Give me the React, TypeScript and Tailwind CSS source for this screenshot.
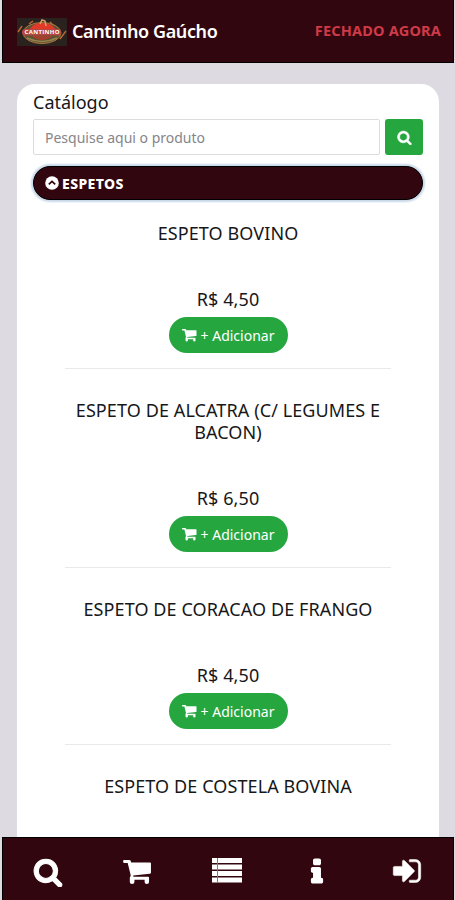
import type { ReactNode } from 'react'

// ─── Data ─────────────────────────────────────────────────────────────────────

const PRODUCTS = [
  { name: 'ESPETO BOVINO', price: 'R$ 4,50' },
  { name: 'ESPETO DE ALCATRA (C/ LEGUMES E BACON)', price: 'R$ 6,50' },
  { name: 'ESPETO DE CORACAO DE FRANGO', price: 'R$ 4,50' },
  { name: 'ESPETO DE COSTELA BOVINA' },
]

// ─── Icons ────────────────────────────────────────────────────────────────────

function Icon({ className, children }: { className: string; children: ReactNode }) {
  return (
    <svg viewBox="0 0 1792 1792" fill="currentColor" className={className} aria-hidden="true">
      {children}
    </svg>
  )
}

function SearchIcon({ className }: { className: string }) {
  return (
    <Icon className={className}>
      <path
        stroke="currentColor"
        strokeWidth="60"
        d="M1216 832q0-185-131.5-316.5t-316.5-131.5-316.5 131.5-131.5 316.5 131.5 316.5 316.5 131.5 316.5-131.5 131.5-316.5zm512 832q0 52-38 90t-90 38q-54 0-90-38l-343-342q-179 124-399 124-143 0-273.5-55.5t-225-150-150-225-55.5-273.5 55.5-273.5 150-225 225-150 273.5-55.5 273.5 55.5 225 150 150 225 55.5 273.5q0 220-124 399l343 343q37 37 37 90z"
      />
    </Icon>
  )
}

function CartIcon({ className }: { className: string }) {
  return (
    <svg viewBox="0 0 30 26" fill="currentColor" className={className} aria-hidden="true">
      <path d="M1 0h5.500q1.500 0 2 2.500H28q1 0 1 1V13q0 1-1 1.200L10.500 16l.3 1.500H26q1 0 1 1v4.500q0 2-2.300 2T22.400 23v-2.500H11.800V23q0 2-2.400 2T7 23v-4.500L8 16 4.800 3H1Q0 3 0 1.500T1 0z" />
    </svg>
  )
}

function ListIcon({ className }: { className: string }) {
  return (
    <svg viewBox="0 0 30 25" fill="currentColor" className={className} aria-hidden="true">
      <path d="M0 0h30v5H0zM0 6.500h30v5H0zM0 13h30v5H0zM0 19.500h30v5H0z" />
      <path d="M5.500 0v25" stroke="#8d7580" strokeWidth="1" />
    </svg>
  )
}

function InfoIcon({ className }: { className: string }) {
  return (
    <Icon className={className}>
      <path
        stroke="currentColor"
        strokeWidth="90"
        d="M1216 1344v128q0 26-19 45t-45 19h-512q-26 0-45-19t-19-45v-128q0-26 19-45t45-19h64v-384h-64q-26 0-45-19t-19-45v-128q0-26 19-45t45-19h384q26 0 45 19t19 45v576h64q26 0 45 19t19 45zm-128-1152v192q0 26-19 45t-45 19h-256q-26 0-45-19t-19-45v-192q0-26 19-45t45-19h256q26 0 45 19t19 45z"
      />
    </Icon>
  )
}

function SignInIcon({ className }: { className: string }) {
  return (
    <Icon className={className}>
      <path
        stroke="currentColor"
        strokeWidth="30"
        d="M1312 896q0 26-19 45l-544 544q-19 19-45 19t-45-19-19-45v-288h-448q-26 0-45-19t-19-45v-384q0-26 19-45t45-19h448v-288q0-26 19-45t45-19 45 19l544 544q19 19 19 45zm352-352v704q0 119-84.5 203.5t-203.5 84.5h-320q-13 0-22.5-9.5t-9.5-22.5q0-4-1-20t-.5-26.5 3-23.5 10-19.5 20.5-6.5h320q66 0 113-47t47-113v-704q0-66-47-113t-113-47h-312l-11.5-1-11.5-3-8-5.5-7-9-2-13.5q0-4-1-20t-.5-26.5 3-23.5 10-19.5 20.5-6.5h320q119 0 203.5 84.5t84.5 203.5z"
      />
    </Icon>
  )
}

function ChevronCircleIcon({ className }: { className: string }) {
  return (
    <svg viewBox="0 0 14 14" className={className} aria-hidden="true">
      <circle cx="7" cy="7" r="6.8" fill="currentColor" />
      <path d="M3.800 8.300 7 5.300l3.200 3" fill="none" stroke="#32060e" strokeWidth="1.700" />
    </svg>
  )
}

function Logo() {
  return (
    <svg viewBox="0 0 50 28" className="mt-0.5 h-7 w-[50px] shrink-0" aria-hidden="true">
      <rect width="50" height="28" fill="#29221f" />
      <path d="M1 14 5 8M43 21l6-8M12 6l4-3M33 4l4 4" stroke="#b56b38" strokeWidth="1.4" />
      <ellipse cx="25" cy="15" rx="19" ry="10.500" fill="#5c5235" stroke="#ad7841" />
      <path d="M13 11q4-7 12-6 10 0 13 6z" fill="#e0392a" />
      <path d="M23 6 25 2l3 1 1 5" fill="none" stroke="#dfa066" strokeWidth="1.5" />
      <path d="M15 18h20q-4 4-10 4t-10-4" fill="#a3402c" />
      <path d="M10 20q15 7 30 0" fill="none" stroke="#98834b" strokeWidth="1.5" />
      <rect x="5" y="11" width="39" height="6.500" rx="3" fill="#b5473e" />
      <text x="25" y="16.300" textAnchor="middle" textLength="35" fontSize="6" fontWeight="700" fill="#fff" fontFamily="Open Sans, sans-serif">
        CANTINHO
      </text>
    </svg>
  )
}

// ─── Product ──────────────────────────────────────────────────────────────────

function Product({ name, price }: { name: string; price?: string }) {
  return (
    <article className="mx-8 pt-[30px] text-center">
      <h2 className="-mx-2 text-[18px] leading-[22px] tracking-[0.1px]">{name}</h2>
      {price && (
        <>
          <p className="mt-[44px] text-[18px] leading-[22px] tracking-[0.1px]">{price}</p>
          <button className="mx-auto mt-[7px] flex h-9 w-[119px] items-center justify-center gap-[4px] rounded-full bg-[#25a63f] text-[14px] text-white">
            <CartIcon className="h-[13px] w-[15px]" />
            <span className="whitespace-nowrap">+ Adicionar</span>
          </button>
          <hr className="mt-[15px] border-0 border-b-[1.500px] border-[#e9e9ea]" />
        </>
      )}
    </article>
  )
}

// ─── App ──────────────────────────────────────────────────────────────────────

export default function App() {
  return (
    <div className="flex h-[900px] w-[455px] flex-col overflow-hidden bg-[#dddbe1] font-['Noto_Sans','Open_Sans',sans-serif] text-[#171719]">
      <header className="mr-[1px] ml-[2px] flex h-[63px] shrink-0 items-center border-x border-b border-black bg-[#32060e] pr-[12px] pl-[14px]">
        <Logo />
        <h1 className="ml-[5px] text-[18px] font-semibold tracking-[-0.4px] whitespace-nowrap text-white">Cantinho Gaúcho</h1>
        <span className="ml-auto text-[14.500px] font-bold tracking-[0.200px] whitespace-nowrap text-[#cf3a48]">FECHADO AGORA</span>
      </header>

      <main className="mt-[21px] mr-[16px] ml-[17px] flex min-h-0 flex-1 flex-col overflow-hidden rounded-t-[18px] bg-white px-4">
        <p className="mt-[6px] text-[18px] leading-6">Catálogo</p>
        <form className="mt-[5px] flex h-9 shrink-0 gap-[5px]">
          <input
            type="text"
            placeholder="Pesquise aqui o produto"
            className="min-w-0 flex-1 rounded-xs border border-[#dcdcdf] px-[11px] text-[14px] placeholder:text-[#85858a]"
          />
          <button type="button" aria-label="Pesquisar" className="flex w-[38px] items-center justify-center rounded-[3px] bg-[#25a63f] text-white">
            <SearchIcon className="size-[15px]" />
          </button>
        </form>
        <button className="mt-[11px] flex h-[34px] shrink-0 items-center gap-[3px] rounded-full border border-black bg-[#32060e] px-[11px] text-[14px] font-extrabold tracking-[0.400px] text-white shadow-[0_0_2px_2px_#c8d7e8]">
          <ChevronCircleIcon className="size-[14px]" />
          <span>ESPETOS</span>
        </button>
        <section className="-mt-[8px]">
          {PRODUCTS.map((product) => (
            <Product key={product.name} {...product} />
          ))}
        </section>
      </main>

      <nav className="mr-[1px] ml-[2px] grid h-[63px] shrink-0 grid-cols-5 border-x border-t border-black bg-[#32060e] pt-[6px] pr-[2px] text-white">
        <a href="#buscar" aria-label="Buscar" className="flex items-center justify-center">
          <SearchIcon className="size-[30px]" />
        </a>
        <a href="#carrinho" aria-label="Carrinho" className="flex items-center justify-center">
          <CartIcon className="h-[25px] w-[29px]" />
        </a>
        <a href="#catalogo" aria-label="Catálogo" className="flex items-center justify-center pb-1">
          <ListIcon className="h-[25px] w-[30px]" />
        </a>
        <a href="#sobre" aria-label="Sobre" className="flex items-center justify-center">
          <InfoIcon className="size-[30px]" />
        </a>
        <a href="#entrar" aria-label="Entrar" className="flex items-center justify-center pb-0.5 pl-0.5">
          <SignInIcon className="size-8" />
        </a>
      </nav>
    </div>
  )
}
